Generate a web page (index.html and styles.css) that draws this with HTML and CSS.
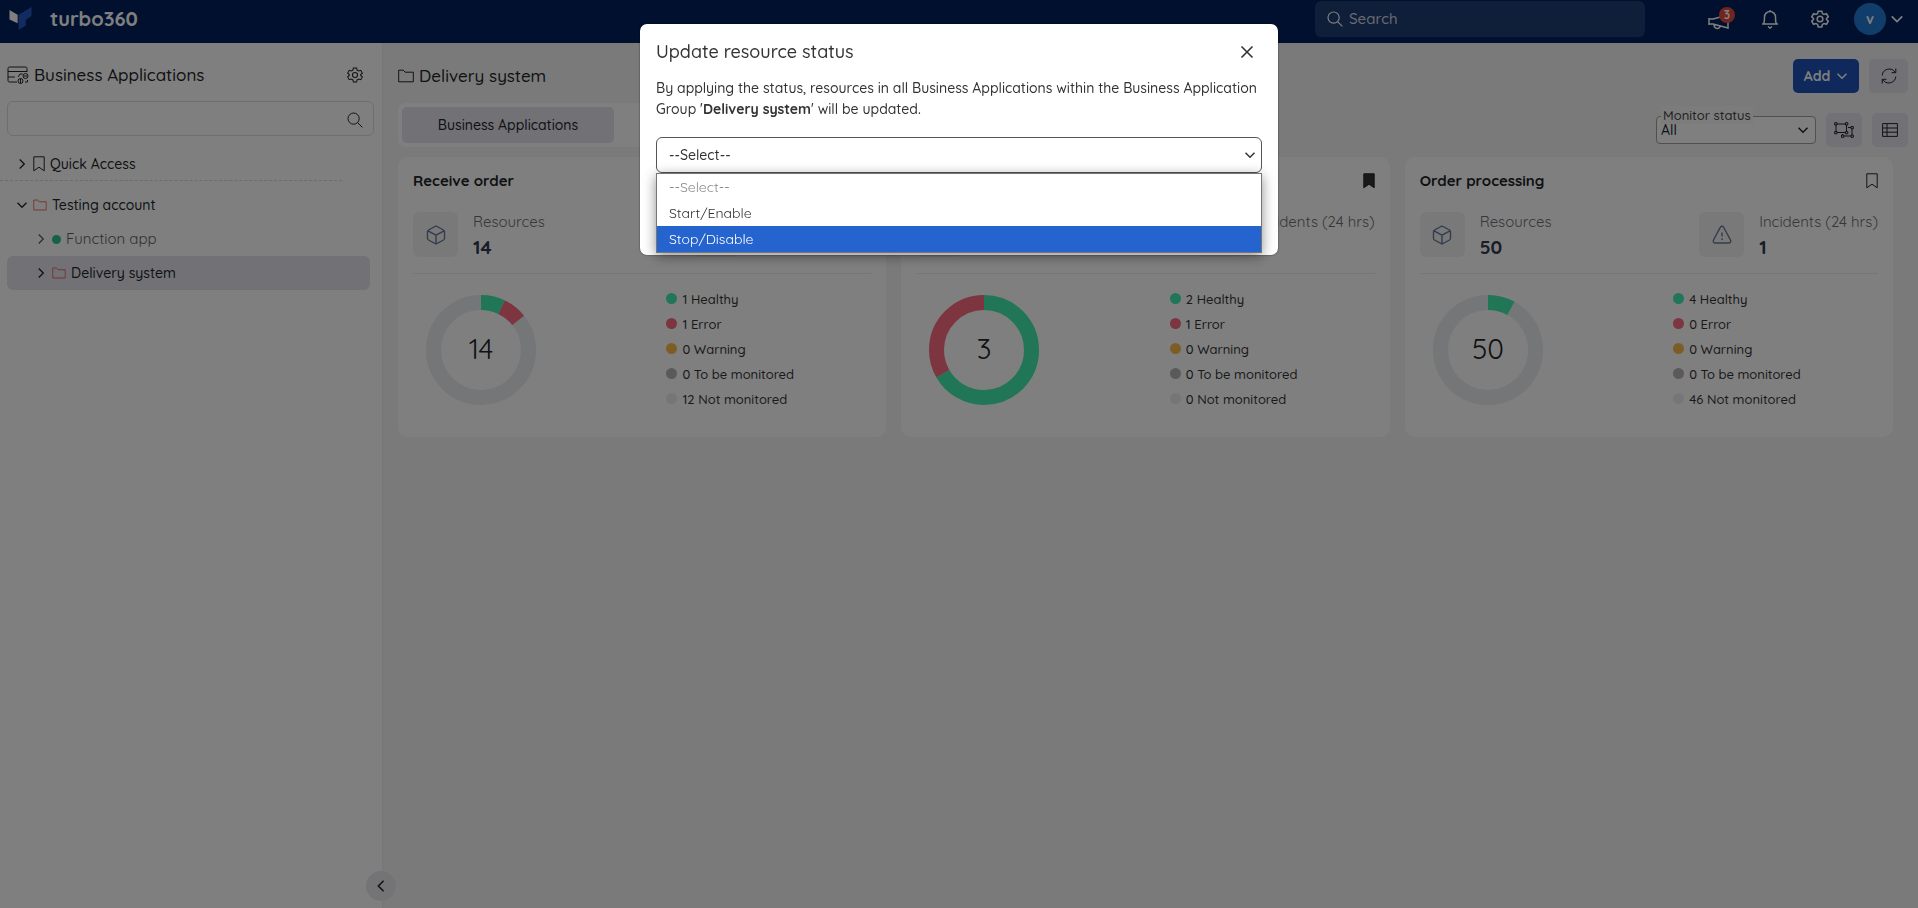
FILE: index.html
```html
<!DOCTYPE html>
<html lang="en">
<head>
<meta charset="utf-8">
<title>Business Applications - turbo360</title>
<link rel="stylesheet" href="styles.css">
</head>
<body>
<svg class="sprite" aria-hidden="true">
  <symbol id="chev-right" viewBox="0 0 16 16"><path d="M5 2l6 6-6 6"/></symbol>
  <symbol id="chev-left" viewBox="0 0 16 16"><path d="M11 2L5 8l6 6"/></symbol>
  <symbol id="chev-down" viewBox="0 0 16 16"><path d="M2 5l6 6 6-6"/></symbol>
  <symbol id="search" viewBox="0 0 16 16"><circle cx="6.6" cy="6.6" r="5.6"/><path d="M10.8 10.8L15.4 15.4"/></symbol>
  <symbol id="folder" viewBox="0 0 16 14"><path d="M.7 12.8V1.2h4.6l1.8 2h8.2v9.6z"/></symbol>
  <symbol id="bookmark" viewBox="0 0 12 16"><path d="M.8.8h10.4v14L6 11.2.8 14.8z"/></symbol>
  <symbol id="gear" viewBox="0 0 24 24"><circle cx="12" cy="12" r="3.8"/><path d="M9.6 1.5h4.8l.8 3.2 2.200 1.300 3.200-1 2.400 4.100-2.400 2.300v1.200l2.400 2.300-2.400 4.100-3.200-1-2.200 1.300-.8 3.200H9.600l-.8-3.200L6.600 18l-3.200 1L1 14.900l2.400-2.300v-1.200L1 9.100 3.400 5l3.200 1 2.200-1.300z"/></symbol>
  <symbol id="cube" viewBox="0 0 20 20"><path d="M10 1l7.500 4a2 2 0 0 1 1 1.700v6.600a2 2 0 0 1-1 1.700L10 19l-7.500-4a2 2 0 0 1-1-1.700V6.700a2 2 0 0 1 1-1.700zM2 5.800l8 4.400 8-4.400M10 10.200V19"/></symbol>
  <symbol id="alert" viewBox="0 0 20 20"><path d="M8.400 2.200a1.800 1.800 0 0 1 3.200 0L18.500 15a2 2 0 0 1-1.800 3H3.300a2 2 0 0 1-1.800-3zM10 7.500v4M10 13.300v1.700"/></symbol>
</svg>

<header class="topbar">
  <a class="brand" href="#">
    <svg class="brand-mark" viewBox="0 0 24 24" aria-hidden="true"><path fill="#fff" d="M.5 3l8.500 5v9l-8.500-4z"/><path fill="#2456c0" d="M10 8L23.500 0v9.500l-6 4v6L10 24z"/></svg>
    <span>turbo360</span>
  </a>
  <label class="top-search">
    <svg class="icon" viewBox="0 0 16 16" aria-hidden="true"><use href="#search"/></svg>
    <input type="search" placeholder="Search" aria-label="Search">
  </label>
  <nav class="top-actions" aria-label="Account">
    <button class="top-btn announce" type="button" aria-label="Announcements">
      <svg class="icon" viewBox="0 0 22 18"><path d="M1 6h4L20 2v13L5 11H1zM6 11.500c0 5 6 5 6 1.500M1 5v7"/></svg>
      <span class="badge">3</span>
    </button>
    <button class="top-btn" type="button" aria-label="Notifications">
      <svg class="icon bell" viewBox="0 0 18 20"><path d="M1 15h16M2.500 15c1-1.500 1-3.500 1-7a5.500 5.500 0 0 1 11 0c0 3.500 0 5.500 1 7M7 17.500l2 1.500 2-1.500M9 1v1.500"/></svg>
    </button>
    <button class="top-btn" type="button" aria-label="Settings">
      <svg class="icon cog" viewBox="0 0 24 24"><use href="#gear"/></svg>
    </button>
    <button class="profile" type="button" aria-label="Profile">
      <span class="avatar">v</span>
      <svg class="icon chev" viewBox="0 0 16 16"><use href="#chev-down"/></svg>
    </button>
  </nav>
</header>

<div class="shell">
  <aside class="sidebar">
    <div class="side-head">
      <svg class="icon apps" viewBox="0 0 22 18" aria-hidden="true"><path d="M10 16H2.500A1.500 1.500 0 0 1 1 14.500v-12A1.500 1.500 0 0 1 2.500 1h16A1.500 1.500 0 0 1 20 2.500V6M1 5.500h19M1 11h7"/><circle cx="18.500" cy="10" r="2.500"/><circle cx="13.500" cy="15" r="2.500"/><path d="M11 11l2-3 2.500 0M18 16h2.500v-2M13.500 13v4M17 10h3"/></svg>
      <h1>Business Applications</h1>
      <button class="plain" type="button" aria-label="Configure"><svg class="icon side-gear" viewBox="0 0 24 24"><use href="#gear"/></svg></button>
    </div>
    <label class="side-search">
      <input type="text" aria-label="Search applications">
      <svg class="icon" viewBox="0 0 16 16" aria-hidden="true"><use href="#search"/></svg>
    </label>
    <nav class="tree" aria-label="Applications">
      <a class="node quick" href="#"><svg class="icon chev" viewBox="0 0 16 16"><use href="#chev-right"/></svg><svg class="icon mark" viewBox="0 0 12 16"><use href="#bookmark"/></svg>Quick Access</a>
      <a class="node root" href="#"><svg class="icon chev" viewBox="0 0 16 16"><use href="#chev-down"/></svg><svg class="icon fold" viewBox="0 0 16 14"><use href="#folder"/></svg>Testing account</a>
      <a class="node child muted" href="#"><svg class="icon chev" viewBox="0 0 16 16"><use href="#chev-right"/></svg><i class="state"></i>Function app</a>
      <a class="node child selected" href="#"><svg class="icon chev" viewBox="0 0 16 16"><use href="#chev-right"/></svg><svg class="icon fold" viewBox="0 0 16 14"><use href="#folder"/></svg>Delivery system</a>
    </nav>
    <button class="collapse" type="button" aria-label="Collapse"><svg class="icon" viewBox="0 0 16 16"><use href="#chev-left"/></svg></button>
  </aside>

  <main class="main">
    <div class="main-head">
      <h2><svg class="icon" viewBox="0 0 16 14" aria-hidden="true"><use href="#folder"/></svg>Delivery system</h2>
      <button class="add" type="button">Add <svg class="icon" viewBox="0 0 16 16"><use href="#chev-down"/></svg></button>
      <button class="tool refresh" type="button" aria-label="Refresh"><svg class="icon" viewBox="0 0 16 16"><path d="M1.200 7.500a7 7 0 0 1 13-3M14.800 8.500a7 7 0 0 1-13 3M14.800.5v4.200h-4.200M1.200 15.500v-4.200h4.200"/></svg></button>
    </div>
    <div class="toolbar">
      <div class="tabs"><button class="tab" type="button">Business Applications</button></div>
      <div class="filters">
        <div class="field">
          <label for="monitor">Monitor status</label>
          <select id="monitor"><option>All</option></select>
          <svg class="icon" viewBox="0 0 16 16" aria-hidden="true"><use href="#chev-down"/></svg>
        </div>
        <button class="tool" type="button" aria-label="Group view"><svg class="icon wide" viewBox="0 0 20 16"><path d="M2 2h10.500v8.500H2zM14 5.500h4V14H8.500v-2"/><path class="dot-fill" d="M.7.7h2.300v2.300H.7zM11.500.7h2.300v2.300h-2.300zM.7 9.500h2.300v2.300H.7zM11.500 9.500h2.300v2.300h-2.300zM17 4.500h2.300v2.300H17zM17 13h2.300v2.300H17zM7.500 13h2.300v2.300H7.500z"/></svg></button>
        <button class="tool" type="button" aria-label="Table view"><svg class="icon" viewBox="0 0 16 14"><path d="M.6.6h14.800v12.800H.6zM.6 5h14.800M.6 9.200h14.800M5 .6v12.800"/></svg></button>
      </div>
    </div>

    <div class="cards">
      <article class="card">
        <div class="card-head"><h3>Receive order</h3></div>
        <div class="stats">
          <div class="stat"><span class="tile"><svg class="icon" viewBox="0 0 20 20"><use href="#cube"/></svg></span><div><p>Resources</p><strong>14</strong></div></div>
          <div class="stat"><span class="tile"><svg class="icon" viewBox="0 0 20 20"><use href="#alert"/></svg></span><div><p>Incidents (24 hrs)</p></div></div>
        </div>
        <div class="health">
          <svg class="donut" viewBox="0 0 110 110" role="img" aria-label="14 resources">
            <g transform="rotate(-90 55 55)"><circle class="ring none" cx="55" cy="55" r="47.500"/><circle class="ring ok" cx="55" cy="55" r="47.500" pathLength="14" stroke-dasharray="1 13"/><circle class="ring err" cx="55" cy="55" r="47.500" pathLength="14" stroke-dasharray="1 13" stroke-dashoffset="-1"/></g>
            <text x="55" y="64">14</text>
          </svg>
          <ul class="legend"><li class="ok">1 Healthy</li><li class="err">1 Error</li><li class="warn">0 Warning</li><li class="todo">0 To be monitored</li><li class="none">12 Not monitored</li></ul>
        </div>
      </article>

      <article class="card">
        <div class="card-head"><h3></h3><button class="plain" type="button" aria-label="Remove bookmark"><svg class="icon mark filled" viewBox="0 0 12 16"><use href="#bookmark"/></svg></button></div>
        <div class="stats">
          <div class="stat"><span class="tile"><svg class="icon" viewBox="0 0 20 20"><use href="#cube"/></svg></span><div><p>Resources</p><strong>3</strong></div></div>
          <div class="stat"><span class="tile"><svg class="icon" viewBox="0 0 20 20"><use href="#alert"/></svg></span><div><p>Incidents (24 hrs)</p></div></div>
        </div>
        <div class="health">
          <svg class="donut" viewBox="0 0 110 110" role="img" aria-label="3 resources">
            <g transform="rotate(-90 55 55)"><circle class="ring ok" cx="55" cy="55" r="47.500" pathLength="3" stroke-dasharray="2 1"/><circle class="ring err" cx="55" cy="55" r="47.500" pathLength="3" stroke-dasharray="1 2" stroke-dashoffset="-2"/></g>
            <text x="55" y="64">3</text>
          </svg>
          <ul class="legend"><li class="ok">2 Healthy</li><li class="err">1 Error</li><li class="warn">0 Warning</li><li class="todo">0 To be monitored</li><li class="none">0 Not monitored</li></ul>
        </div>
      </article>

      <article class="card">
        <div class="card-head"><h3>Order processing</h3><button class="plain" type="button" aria-label="Bookmark"><svg class="icon mark" viewBox="0 0 12 16"><use href="#bookmark"/></svg></button></div>
        <div class="stats">
          <div class="stat"><span class="tile"><svg class="icon" viewBox="0 0 20 20"><use href="#cube"/></svg></span><div><p>Resources</p><strong>50</strong></div></div>
          <div class="stat"><span class="tile"><svg class="icon" viewBox="0 0 20 20"><use href="#alert"/></svg></span><div><p>Incidents (24 hrs)</p><strong>1</strong></div></div>
        </div>
        <div class="health">
          <svg class="donut" viewBox="0 0 110 110" role="img" aria-label="50 resources">
            <g transform="rotate(-90 55 55)"><circle class="ring none" cx="55" cy="55" r="47.500"/><circle class="ring ok" cx="55" cy="55" r="47.500" pathLength="50" stroke-dasharray="4 46"/></g>
            <text x="55" y="64">50</text>
          </svg>
          <ul class="legend"><li class="ok">4 Healthy</li><li class="err">0 Error</li><li class="warn">0 Warning</li><li class="todo">0 To be monitored</li><li class="none">46 Not monitored</li></ul>
        </div>
      </article>
    </div>
  </main>
</div>

<div class="backdrop">
  <section class="modal" role="dialog" aria-modal="true" aria-labelledby="dlg-title">
    <div class="modal-head">
      <h2 id="dlg-title">Update resource status</h2>
      <button class="plain" type="button" aria-label="Close"><svg class="icon" viewBox="0 0 16 16"><path d="M2.500 2.500l11 11M13.500 2.500l-11 11"/></svg></button>
    </div>
    <p>By applying the status, resources in all Business Applications within the Business Application Group '<b>Delivery system</b>' will be updated.</p>
    <div class="status-field">
      <select aria-label="Status"><option>--Select--</option><option>Start/Enable</option><option>Stop/Disable</option></select>
      <svg class="icon" viewBox="0 0 16 16" aria-hidden="true"><use href="#chev-down"/></svg>
      <ul class="options" role="listbox" aria-label="Status options">
        <li class="off" role="option" aria-disabled="true">--Select--</li>
        <li role="option">Start/Enable</li>
        <li class="active" role="option" aria-selected="true">Stop/Disable</li>
      </ul>
    </div>
  </section>
</div>
</body>
</html>
```
FILE: styles.css
```css
* { box-sizing: border-box; }
body {
  margin: 0;
  min-height: 100vh;
  display: flex;
  flex-direction: column;
  font: 500 14px/20px Quicksand, Lato, sans-serif;
  color: #212529;
  background: #f5f5f5;
}
h1, h2, h3, p, ul { margin: 0; padding: 0; }
ul { list-style: none; }
button, input, select { font: inherit; color: inherit; }
button { border: 0; padding: 0; background: none; display: flex; align-items: center; justify-content: center; }
input { border: 0; background: none; outline: 0; min-width: 0; }
select { appearance: none; outline: 0; width: 100%; }
a { color: inherit; text-decoration: none; }
.sprite { position: absolute; width: 0; height: 0; }
.icon { width: 16px; height: 16px; flex: none; fill: none; stroke: currentColor; stroke-width: 1; }

/* Top bar */
.topbar { height: 43px; display: flex; align-items: center; padding: 0 14px 6px 9px; background: #00205c; color: #fff; }
.brand { display: flex; align-items: center; gap: 18px; font-size: 20px; font-weight: 700; margin-right: auto; }
.brand-mark { width: 23px; height: 23px; }
.top-search { width: 330px; height: 36px; margin-right: 63px; padding: 0 12px; display: flex; align-items: center; gap: 4px; border-radius: 6px; background: #1f3c73; }
.top-search .icon { stroke-width: 1.2; }
.top-search input { flex: 1; font-size: 15px; }
.top-search input::placeholder { color: #d0d5e0; }
.top-actions { display: flex; align-items: center; gap: 30px; }
.top-btn { position: relative; min-width: 20px; height: 24px; }
.top-btn .icon { stroke-width: 1.5; }
.announce .icon { width: 22px; height: 18px; margin-top: 6px; }
.badge { position: absolute; right: -5px; top: 0; width: 16px; height: 16px; border-radius: 8px; background: #e04a3c; font-size: 12px; line-height: 16px; font-weight: 700; }
.top-btn .bell { width: 18px; height: 20px; }
.top-btn .cog { width: 18px; height: 18px; stroke-width: 2; }
.profile { gap: 4px; margin-left: -6px; }
.profile .chev { width: 14px; height: 14px; stroke-width: 2; }
.avatar { width: 32px; height: 32px; border-radius: 16px; background: #227ad6; line-height: 32px; font-weight: 700; }

/* Sidebar */
.shell { flex: 1; display: flex; }
.sidebar { position: relative; width: 383px; flex: none; background: #fff; border-right: 1px solid #ececec; }
.side-head { display: flex; align-items: center; gap: 5px; padding: 20px 19px 0 7px; height: 44px; }
.side-head h1 { flex: 1; font-size: 17px; line-height: 24px; font-weight: 500; }
.side-head .apps { width: 22px; height: 18px; }
.side-gear { width: 16px; height: 16px; stroke-width: 1.6; }
.side-search { display: flex; align-items: center; height: 35px; margin: 14px 8px 0 7px; padding: 3px 10px 0; border: 1px solid #dcdcdc; border-radius: 6px; }
.side-search input { flex: 1; }
.tree { margin-top: 11px; }
.node { display: flex; align-items: center; gap: 5px; height: 34px; margin: 0 12px 0 7px; }
.node .chev { width: 12px; height: 12px; stroke-width: 1.8; }
.mark { width: 12px; height: 16px; }
.fold { width: 14px; height: 12px; color: #e2584a; }
.quick { padding-left: 16px; margin: 0 40px 0 0; border-bottom: 1px dashed #d8d8d8; }
.root { margin-top: 7px; padding-left: 9px; }
.child { padding-left: 28px; }
.muted { color: #5b5f66; font-size: 15px; font-weight: 400; }
.state { width: 9px; height: 9px; border-radius: 5px; background: #2cc48e; }
.selected { border-radius: 6px; background: #e3e2ec; }
.collapse { position: absolute; right: -14px; bottom: 7px; width: 30px; height: 30px; border-radius: 15px; background: #e9e9ee; }
.collapse .icon { width: 14px; height: 14px; stroke-width: 1.8; }

/* Main column */
.main { flex: 1; min-width: 0; padding: 16px 10px 16px 15px; }
.main-head { display: flex; align-items: center; gap: 10px; }
.main-head h2 { flex: 1; display: flex; align-items: center; gap: 5px; font-size: 17px; line-height: 24px; font-weight: 500; }
.add { width: 66px; height: 34px; gap: 6px; border-radius: 5px; background: #2152b8; color: #fff; font-weight: 700; }
.add .icon { width: 12px; height: 12px; stroke-width: 2; }
.tool { width: 36px; height: 34px; border-radius: 5px; background: #e3e2ec; }
.tool .wide { width: 20px; height: 16px; }
.dot-fill { fill: #e3e2ec; }
.refresh { width: 39px; }
.toolbar { display: flex; justify-content: space-between; align-items: flex-end; margin-top: 10px; }
.tabs { width: 432px; padding: 4px; border-radius: 8px; background: #fff; }
.tab { width: 50%; height: 36px; border-radius: 5px; background: #e3e2ec; }
.filters { display: flex; align-items: center; gap: 10px; }
.field { position: relative; width: 160px; }
.field select { display: block; height: 28px; padding: 0 4px; border: 1px solid #a0a0a0; border-radius: 4px; background: #fff; }
.field label { position: absolute; left: 5px; top: -10px; padding: 0 2px; font-size: 13px; line-height: 18px; background: #f8f8f8; color: #444; }
.field select + .icon { position: absolute; right: 7px; top: 8px; width: 12px; height: 12px; stroke-width: 2; pointer-events: none; }

.cards { display: grid; grid-template-columns: repeat(3, 1fr); gap: 15px; margin: 10px 15px 0 0; }
.card { min-height: 280px; padding: 12px 15px; border-radius: 10px; background: #fff; }
.card-head { display: flex; justify-content: space-between; align-items: center; height: 24px; }
.card-head h3 { font-size: 15px; font-weight: 700; }
.filled use { fill: #333; }
.stats { display: flex; justify-content: space-between; height: 81px; padding-top: 19px; border-bottom: 1px solid #ececec; }
.stat { display: flex; gap: 15px; }
.tile { width: 45px; height: 45px; display: grid; place-items: center; border-radius: 6px; background: #f3f3f5; color: #64789b; }
.tile .icon { width: 20px; height: 20px; stroke-width: 1.4; }
.stat p { font-size: 15px; font-weight: 400; color: #6b6f76; }
.stat strong { display: block; font-size: 19px; line-height: 24px; margin-top: 3px; color: #343a4f; }
.health { display: grid; grid-template-columns: 54fr 46fr; padding: 12px 0 0 13px; }
.donut { width: 110px; height: 110px; margin-top: 9px; }
.donut text { font-size: 28px; font-weight: 400; text-anchor: middle; fill: #212529; }
.ring { fill: none; stroke-width: 15; }
.ring.ok { stroke: #42ecb0; }
.ring.err { stroke: #fb6a7e; }
.ring.none { stroke: #e9ecef; }
.legend li { display: flex; align-items: center; gap: 5px; height: 25px; font-size: 13px; color: #333; }
.legend li::before { content: ""; width: 11px; height: 11px; border-radius: 50%; background: #e9ecef; }
.legend .ok::before { background: #42ecb0; }
.legend .err::before { background: #fb6a7e; }
.legend .warn::before { background: #f8bb4c; }
.legend .todo::before { background: #b4b4b4; }

/* Dialog */
.backdrop { position: fixed; inset: 0; display: flex; justify-content: center; align-items: flex-start; padding-top: 24px; background: rgba(0, 0, 0, .5); }
.modal { width: 638px; padding: 16px 16px 82px; border-radius: 7px; background: #fff; box-shadow: 0 0 2px rgba(0, 0, 0, .6); color: #333; }
.modal-head { display: flex; align-items: center; justify-content: space-between; height: 24px; padding-right: 7px; }
.modal-head h2 { font-size: 18px; font-weight: 500; }
.modal-head .icon { stroke-width: 1.6; }
.modal p { margin: 14px 0 17px; line-height: 21px; }
.status-field { position: relative; }
.status-field select { display: block; height: 36px; padding: 0 12px; border: 1px solid #555; border-radius: 6px; background: #fff; }
.status-field .icon { position: absolute; right: 6px; top: 12px; width: 12px; height: 12px; stroke-width: 2; }
.options { position: absolute; left: 0; right: 0; top: 36px; border: 1px solid #767676; background: #fff; box-shadow: 0 3px 12px rgba(0, 0, 0, .45); font-weight: 400; }
.options li { height: 26px; padding: 0 12px; line-height: 26px; }
.options .off { color: #8a8a8a; }
.options .active { background: #2564cf; color: #fff; }
```
